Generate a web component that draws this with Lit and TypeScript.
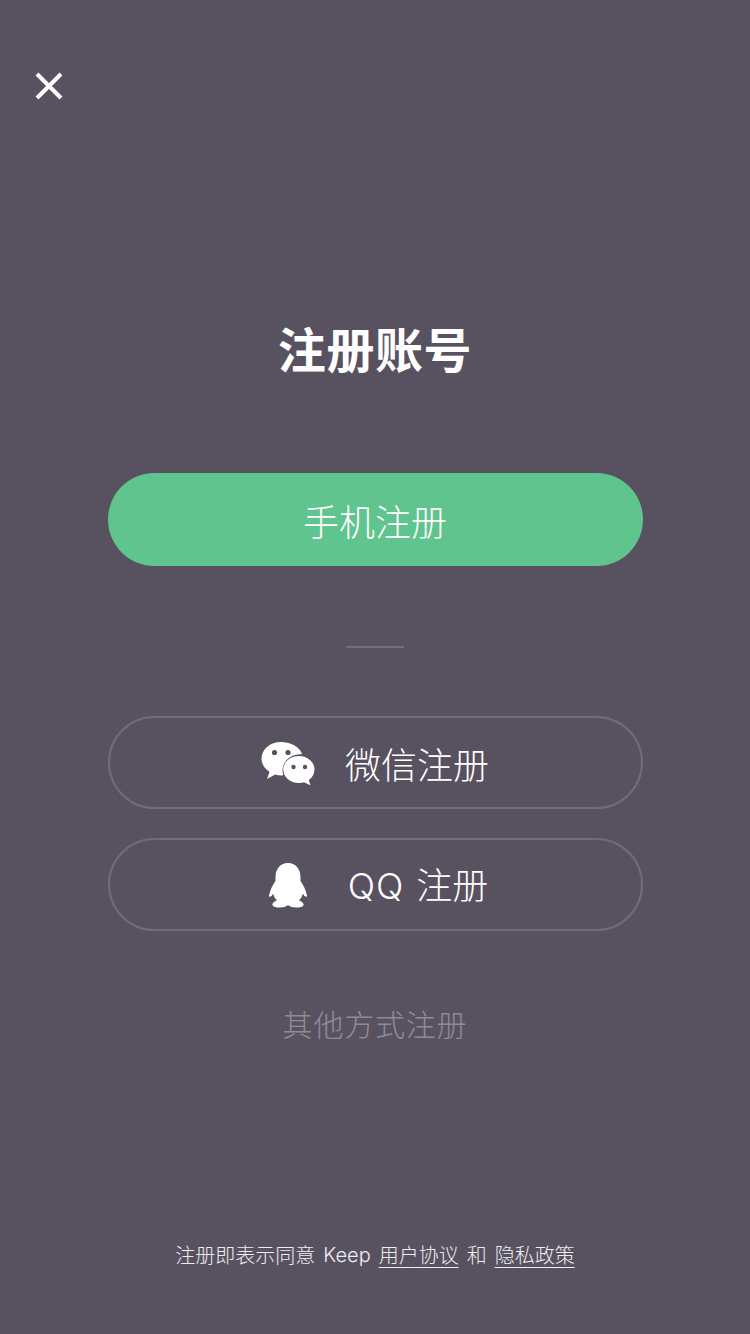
import { LitElement, html, css } from "lit";
import { customElement } from "lit/decorators.js";

@customElement("app-root")
export class AppRoot extends LitElement {
  static styles = css`
    :host {
      display: block;
      width: 750px;
      height: 1334px;
      background: #585260;
      color: #fff;
      font-family: "Noto Sans CJK SC", "Noto Sans", sans-serif;
      overflow: hidden;
    }
    .page {
      height: 1334px;
      box-sizing: border-box;
      display: flex;
      flex-direction: column;
      align-items: center;
      padding-top: 72px;
    }
    .close {
      align-self: flex-start;
      margin-left: 35px;
      width: 28px;
      height: 28px;
      display: block;
    }
    h1 {
      margin: 215px 0 0;
      height: 64px;
      line-height: 64px;
      font-size: 48px;
      font-weight: 700;
      letter-spacing: 0.6px;
    }
    .btn {
      box-sizing: border-box;
      width: 535px;
      height: 93px;
      border-radius: 47px;
      display: flex;
      align-items: center;
      justify-content: center;
      font-size: 36px;
      font-weight: 300;
      line-height: 1;
    }
    .primary {
      margin-top: 94px;
      background: #5fc48e;
    }
    .divider {
      width: 58px;
      height: 2px;
      background: #726d79;
      margin: 80px 0 68px;
    }
    .outline {
      border: 2px solid #716c79;
      margin-bottom: 29px;
    }
    .outline .inner {
      display: flex;
      align-items: center;
    }
    .wx-icon { width: 54px; height: 44px; margin-right: 30px; display: block; }
    .qq-icon { width: 40px; height: 46px; margin-right: 40px; margin-left: 6px; display: block; }
    .qq-text { font-family: "Noto Sans CJK SC", sans-serif; word-spacing: 4px; }
    .qq-text .latin { font-family: Inter, "Noto Sans", sans-serif; font-weight: 300; letter-spacing: 1px; }
    .other {
      margin-top: 41px;
      font-size: 30px;
      font-weight: 300;
      line-height: 44px;
      letter-spacing: 0.8px;
      color: #8f8b96;
    }
    .footer {
      margin-top: auto;
      margin-bottom: 64px;
      font-size: 20px;
      font-weight: 300;
      line-height: 30px;
      color: #eeedf0;
      display: flex;
      gap: 8px;
      white-space: nowrap;
    }
    .footer .latin { font-family: Inter, "Noto Sans", sans-serif; }
    .footer u { text-underline-offset: 4px; text-decoration-thickness: 1px; }
  `;

  render() {
    return html`
      <div class="page">
        <svg class="close" viewBox="0 0 28 28" fill="none" stroke="#fff" stroke-width="4">
          <path d="M2 2 L26 26 M26 2 L2 26" />
        </svg>
        <h1>注册账号</h1>
        <div class="btn primary">手机注册</div>
        <div class="divider"></div>
        <div class="btn outline">
          <div class="inner">
            <svg class="wx-icon" viewBox="0 0 54 44">
              <path fill="#fff" d="M20 1C9 1 0.5 8.5 0.5 17.5c0 5.500 3 10 8 13.200L6 38l8.200-4.500c2 .6 4 .9 6.300.9 .6 0 1.200 0 1.800-.1-.5-1.600-.8-3.200-.8-4.900 0-9 8-16.200 18-16.200 .6 0 1.200 0 1.700.1C38.800 6 30.200 1 20 1z" />
              <circle cx="13.500" cy="11.500" r="2.600" fill="#585260" />
              <circle cx="27" cy="11.500" r="2.600" fill="#585260" />
              <path fill="#fff" d="M53.500 28.500c0-7.500-7.200-13.500-15.500-13.500-8.800 0-15.800 6-15.800 13.500S29.200 42 38 42c1.800 0 3.600-.3 5.200-.8L49.500 44.500l-1.700-5.500c3.500-2.500 5.700-6.300 5.700-10.500z" />
              <circle cx="32.500" cy="26" r="2.200" fill="#585260" />
              <circle cx="44" cy="26" r="2.200" fill="#585260" />
            </svg>
            <span>微信注册</span>
          </div>
        </div>
        <div class="btn outline">
          <div class="inner">
            <svg class="qq-icon" viewBox="0 0 40 46">
              <path fill="#fff" d="M20 1C11.500 1 7.500 8 7.500 15c0 1.500 .1 3 0 4C5 22.500 2 28 1 33.500c0 1.200 .5 1.500 1.200 1.200 1-.4 2-1.500 3-3 .6 2.500 2 5 3.800 6.500C6.500 39.500 4 41 4.500 43c.5 2 4 2.500 7.500 2.500 3.500 0 6-.8 7-2h2c1 1.200 3.500 2 7 2s7-.5 7.500-2.500c.5-2-2-3.500-4.500-4.800 1.800-1.500 3.200-4 3.800-6.500 1 1.500 2 2.600 3 3 .7.3 1.200 0 1.200-1.200-1-5.500-4-11-6.500-14.500-.1-1 0-2.500 0-4C32.500 8 28.500 1 20 1z" />
            </svg>
            <span class="qq-text"><span class="latin">QQ</span> 注册</span>
          </div>
        </div>
        <div class="other">其他方式注册</div>
        <div class="footer">
          <span>注册即表示同意</span>
          <span class="latin">Keep</span>
          <u>用户协议</u>
          <span>和</span>
          <u>隐私政策</u>
        </div>
      </div>
    `;
  }
}
